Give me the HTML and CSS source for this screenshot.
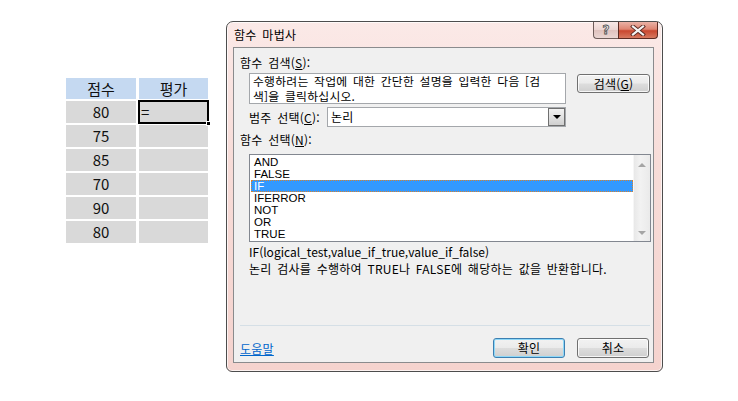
FILE: index.html
```html
<!DOCTYPE html>
<html lang="ko">
<head>
<meta charset="utf-8" />
<link rel="stylesheet" href="styles.css">
</head>
<body>
  <div class="stage">
    <div class="sheet">
      <div class="cell head">점수</div><div class="cell head">평가</div>
      <div class="cell">80</div><div class="cell active">=<span class="handle"></span></div>
      <div class="cell">75</div><div class="cell"></div>
      <div class="cell">85</div><div class="cell"></div>
      <div class="cell">70</div><div class="cell"></div>
      <div class="cell">90</div><div class="cell"></div>
      <div class="cell">80</div><div class="cell"></div>
    </div>

    <div class="dialog">
      <div class="titlebar">
        <span class="title">함수 마법사</span>
        <div class="caption">
          <span class="cap help">?</span>
          <span class="cap close">
            <svg width="16" height="11" viewBox="0 0 16 11">
              <path d="M3 1.5 L13 9.5 M13 1.5 L3 9.5" stroke="#5a2a22" stroke-width="4" stroke-linecap="square"/>
              <path d="M3 1.5 L13 9.5 M13 1.5 L3 9.5" stroke="#f4f4f4" stroke-width="2.2" stroke-linecap="square"/>
            </svg>
          </span>
        </div>
      </div>

      <div class="client">
        <div class="label">함수 검색(<u>S</u>):</div>
        <div class="search-row">
          <div class="textbox">
            <div class="tline">수행하려는 작업에 대한 간단한 설명을 입력한 다음 [검</div>
            <div class="tline">색]을 클릭하십시오.</div>
          </div>
          <div class="btn search-btn">검색(<u>G</u>)</div>
        </div>
        <div class="cat-row">
          <span class="cat-label">범주 선택(<u>C</u>):</span>
          <div class="combo">
            <span class="combo-text">논리</span>
            <span class="combo-arrow"><span class="tri-down"></span></span>
          </div>
        </div>
        <div class="label">함수 선택(<u>N</u>):</div>
        <div class="listbox">
          <ul class="items">
            <li>AND</li>
            <li>FALSE</li>
            <li class="selected">IF</li>
            <li>IFERROR</li>
            <li>NOT</li>
            <li>OR</li>
            <li>TRUE</li>
          </ul>
          <div class="scroll">
            <span class="arr up"></span>
            <span class="arr down"></span>
          </div>
        </div>
        <div class="desc">
          <div class="syntax">IF(logical_test,value_if_true,value_if_false)</div>
          <div>논리 검사를 수행하여 TRUE나 FALSE에 해당하는 값을 반환합니다.</div>
        </div>
        <div class="sep"></div>
        <div class="footer">
          <a class="help-link" href="#">도움말</a>
          <div class="btn default">확인</div>
          <div class="btn">취소</div>
        </div>
      </div>
    </div>
  </div>
</body>
</html>
```

FILE: styles.css
```css
*{
  margin:0;
  padding:0;
  box-sizing:border-box;
}
body{
  width:738px;
  height:401px;
  background:#fff;
  font-family:"Noto Sans CJK KR","Liberation Sans",sans-serif;
  color:#000;
  overflow:hidden;
}
.stage{
  display:flex;
  align-items:flex-start;
  padding:21px 0 0 66px;
}

/* spreadsheet */
.sheet{
  margin-top:57px;
  display:grid;
  grid-template-columns:70px 69px;
  grid-template-rows:21px repeat(6,22px);
  column-gap:3px;
  row-gap:2px;
}
.cell{
  background:#d9d9d9;
  font-size:15px;
  line-height:22px;
  text-align:center;
  color:#111;
}
.cell.head{
  background:#c5d9f1;
  line-height:21px;
}
.cell.active{
  position:relative;
  text-align:left;
  padding-left:2px;
}
.cell.active::after{
  content:"";
  position:absolute;
  left:-1px;
  top:-1px;
  right:-1px;
  bottom:-1px;
  border:2px solid #000;
}
.handle{
  position:absolute;
  right:-3px;
  bottom:-3px;
  width:5px;
  height:5px;
  background:#000;
  border:1px solid #fff;
  z-index:2;
}

/* dialog window */
.dialog{
  margin-left:18px;
  width:437px;
  height:351px;
  border:1px solid #4d4d4d;
  border-radius:7px 7px 6px 6px;
  background:linear-gradient(180deg,#fbe9e7 0%,#f7dcd8 40%,#f5d3ce 100%);
  box-shadow:inset 0 0 0 1px rgba(255,255,255,0.7);
  display:flex;
  flex-direction:column;
  font-size:12px;
}
.titlebar{
  height:25px;
  display:flex;
  padding-left:7px;
}
.title{
  align-self:center;
  line-height:16px;
  margin-top:1px;
  word-spacing:2px;
  letter-spacing:0.3px;
}
.caption{
  margin-left:auto;
  margin-right:4px;
  display:flex;
}
.cap{
  height:17px;
  display:flex;
  align-items:center;
  justify-content:center;
}
.help{
  width:25px;
  border:1px solid #6e5d5a;
  border-top:none;
  border-right:none;
  border-radius:0 0 0 4px;
  background:linear-gradient(180deg,#f8e8e6 0%,#ecd6d3 48%,#dfc2be 52%,#ead6d3 100%);
  font-family:"DejaVu Sans",sans-serif;
  font-weight:bold;
  font-size:12px;
  color:#eeeeee;
  -webkit-text-stroke:0.8px #4f4f4f;
}
.close{
  width:40px;
  border:1px solid #5c2a22;
  border-top:none;
  border-radius:0 0 4px 0;
  background:linear-gradient(180deg,#eab2a6 0%,#de8572 45%,#c9472f 55%,#d77960 100%);
}
.client{
  margin:0 8px 8px 6px;
  height:316px;
  border:1px solid #8a8b8d;
  background:#f0f0f0;
  display:flex;
  flex-direction:column;
  word-spacing:2px;
  letter-spacing:0.25px;
}
.label{
  padding-left:6px;
  line-height:16px;
  height:16px;
}
.client > .label:first-child{
  margin-top:7px;
}
.search-row{
  margin-top:2px;
  margin-left:15px;
  display:flex;
  align-items:flex-start;
}
.textbox{
  width:317px;
  height:31px;
  border:1px solid #a4a7ab;
  background:#fff;
  padding:0 3px;
}
.tline{
  height:14.5px;
  line-height:14.5px;
  font-size:11.8px;
}
.btn{
  width:72px;
  height:20px;
  border:1px solid #707070;
  border-radius:3px;
  background:linear-gradient(180deg,#f2f2f2 0%,#ebebeb 48%,#dddddd 52%,#cfcfcf 100%);
  box-shadow:inset 0 0 0 1px rgba(255,255,255,0.8);
  text-align:center;
  line-height:18px;
}
.search-btn{
  margin-left:11px;
  margin-top:1px;
  width:73px;
  height:19px;
  line-height:17px;
}
.cat-row{
  margin-top:3px;
  margin-left:15px;
  display:flex;
  align-items:center;
  height:20px;
}
.cat-label{
  flex:0 0 78px;
}
.combo{
  width:239px;
  height:20px;
  border:1px solid #a4a7ab;
  background:#fff;
  display:flex;
}
.combo-text{
  flex:1;
  padding-left:3px;
  line-height:18px;
}
.combo-arrow{
  width:17px;
  border:1px solid #6f6f6f;
  background:linear-gradient(180deg,#f2f2f2 0%,#e2e2e2 50%,#cfcfcf 100%);
  display:flex;
  align-items:center;
  justify-content:center;
}
.tri-down{
  width:0;
  height:0;
  border-left:4px solid transparent;
  border-right:4px solid transparent;
  border-top:4px solid #000;
}
.cat-row + .label{
  margin-top:5px;
}
.listbox{
  margin-top:6px;
  margin-left:15px;
  width:402px;
  height:88px;
  border:1px solid #828790;
  background:#fff;
  display:flex;
}
.items{
  flex:1;
  list-style:none;
  padding:1px 0 0 1px;
  letter-spacing:0;
}
.items li{
  height:12px;
  line-height:12px;
  padding-left:3px;
  font-family:"Liberation Sans","Noto Sans CJK KR",sans-serif;
  font-size:11.5px;
}
.items li.selected{
  background:#3399ff;
  color:#fff;
  outline:1px dotted #d9822b;
  outline-offset:-1px;
}
.scroll{
  width:17px;
  background:linear-gradient(90deg,#e8e8e8,#f2f2f2 40%,#eaeaea);
  border-left:1px solid #f6f6f6;
  display:flex;
  flex-direction:column;
  align-items:center;
  justify-content:space-between;
  padding:8px 0 6px;
}
.arr{
  width:0;
  height:0;
  border-left:4px solid transparent;
  border-right:4px solid transparent;
}
.arr.up{
  border-bottom:4px solid #a5a5a5;
}
.arr.down{
  border-top:4px solid #a5a5a5;
}
.desc{
  margin-top:1px;
  margin-left:15px;
  line-height:17px;
  height:34px;
}
.desc .syntax{
  letter-spacing:0;
  word-spacing:0;
}
.sep{
  margin:48px 3px 0 6px;
  height:1px;
  background:#d5dfe6;
}
.footer{
  margin-top:12px;
  padding-left:6px;
  display:flex;
  align-items:center;
  height:20px;
}
.help-link{
  color:#0066cc;
  text-decoration:underline;
  font-size:12px;
}
.footer .btn{
  margin-right:4px;
}
.footer .default{
  margin-left:auto;
  margin-right:12px;
  border-color:#3c7fb1;
  box-shadow:inset 0 0 0 1px #8ed8f8;
}
```
